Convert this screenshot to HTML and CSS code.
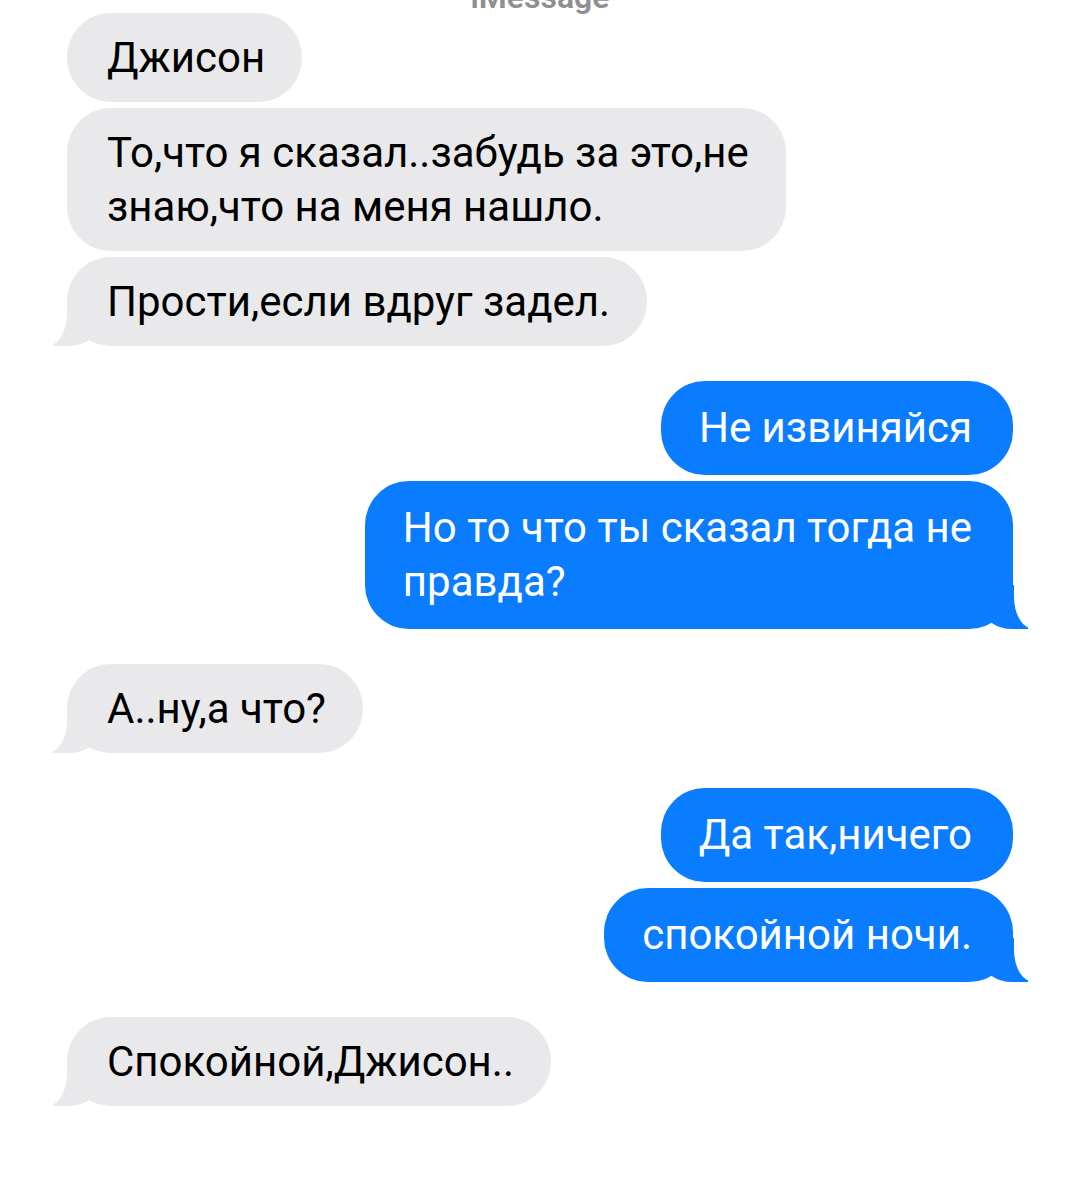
FILE: index.html
```
<!DOCTYPE html>
<html lang="ru">
<head>
<meta charset="utf-8">
<title>iMessage</title>
<link rel="stylesheet" href="styles.css">
</head>
<body>
<main class="screen">
  <div class="app-title">iMessage</div>
  <section class="thread">
    <div class="group them">
      <p class="bubble">Джисон</p>
      <p class="bubble">То,что я сказал..забудь за это,не<br>знаю,что на меня нашло.</p>
      <p class="bubble tail">Прости,если вдруг задел.</p>
    </div>
    <div class="group me">
      <p class="bubble">Не извиняйся</p>
      <p class="bubble tail">Но то что ты сказал тогда не<br>правда?</p>
    </div>
    <div class="group them">
      <p class="bubble tail">А..ну,а что?</p>
    </div>
    <div class="group me">
      <p class="bubble">Да так,ничего</p>
      <p class="bubble tail">спокойной ночи.</p>
    </div>
    <div class="group them">
      <p class="bubble tail">Спокойной,Джисон..</p>
    </div>
  </section>
</main>
</body>
</html>
```

FILE: styles.css
```
* {
  box-sizing: border-box;
}

html,
body {
  margin: 0;
  background: #ffffff;
}

body {
  font-family: Roboto, "Liberation Sans", Arial, sans-serif;
  -webkit-font-smoothing: antialiased;
}

.screen {
  width: 1080px;
  min-height: 1204px;
  overflow: hidden;
}

/* service name, scrolled mostly out of view */
.app-title {
  margin-top: -13px;
  height: 20px;
  line-height: 20px;
  font-size: 32px;
  font-weight: 600;
  color: #8e8e93;
  text-align: center;
}

.thread {
  display: flex;
  flex-direction: column;
  gap: 35px;
  padding: 6px 67px 0;
}

.group {
  display: flex;
  flex-direction: column;
  gap: 6px;
}

.group.them {
  align-items: flex-start;
}

.group.me {
  align-items: flex-end;
}

.bubble {
  position: relative;
  margin: 0;
  font-size: 42px;
  line-height: 54px;
  border-radius: 44px;
  white-space: nowrap;
}

.them .bubble {
  padding: 17.5px 37px 17.5px 40px;
  background: #e9e9eb;
  color: #000000;
}

.me .bubble {
  padding: 20px 41px 20px 38px;
  background: #0a7cff;
  color: #ffffff;
}

/* speech tail: a coloured lobe trimmed by a white curve */
.bubble.tail::before,
.bubble.tail::after {
  content: "";
  position: absolute;
  bottom: 0;
}

.bubble.tail::before {
  z-index: 0;
  height: 44px;
  width: 44px;
}

.bubble.tail::after {
  z-index: 1;
  height: 44px;
  width: 34px;
  background: #ffffff;
}

.them .bubble.tail::before {
  left: -14px;
  background: #e9e9eb;
  border-bottom-right-radius: 28px 20px;
}

.them .bubble.tail::after {
  left: -34px;
  border-bottom-right-radius: 20px 32px;
}

.me .bubble.tail::before {
  right: -15px;
  background: #0a7cff;
  border-bottom-left-radius: 28px 20px;
}

.me .bubble.tail::after {
  right: -35px;
  border-bottom-left-radius: 20px 32px;
}
```
